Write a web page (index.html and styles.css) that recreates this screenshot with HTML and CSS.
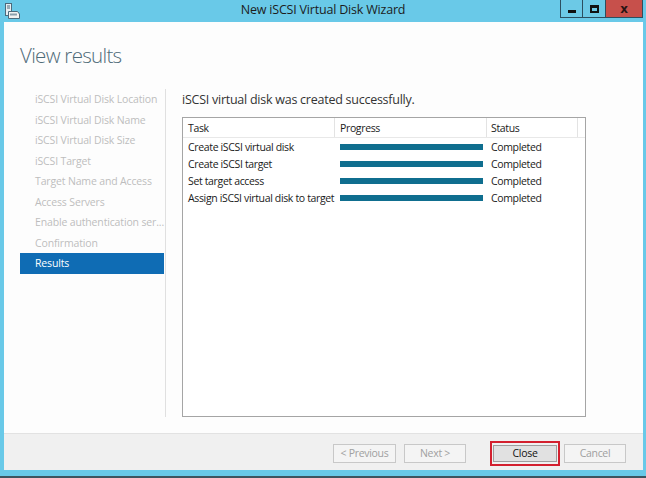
FILE: index.html
```html
<!DOCTYPE html>
<html>
<head>
<meta charset="utf-8">
<link rel="stylesheet" href="styles.css">
</head>
<body>
<div class="window">
  <div class="titlebar">
    <svg class="app-icon" width="16" height="16" viewBox="0 0 16 16">
      <rect x="1.5" y="0.5" width="6" height="12" fill="#e8eef2" stroke="#4c6a7c"/>
      <line x1="3" y1="3" x2="6" y2="3" stroke="#4c6a7c"/>
      <line x1="3" y1="5" x2="6" y2="5" stroke="#4c6a7c"/>
      <path d="M4.5 8.5 H13.5 L15.5 11 V15.5 H4.5 Z" fill="#f2f2f2" stroke="#4c6a7c"/>
      <rect x="6" y="10.5" width="7" height="2" fill="#8aa0ae"/>
    </svg>
    <div class="title">New iSCSI Virtual Disk Wizard</div>
    <div class="controls">
      <div class="ctl min"><span class="min-bar"></span></div>
      <div class="ctl max"><span class="max-box"></span></div>
      <div class="ctl close">x</div>
    </div>
  </div>
  <div class="client">
    <div class="main">
      <h1 class="heading">View results</h1>
      <div class="body">
        <ul class="nav">
          <li>iSCSI Virtual Disk Location</li>
          <li>iSCSI Virtual Disk Name</li>
          <li>iSCSI Virtual Disk Size</li>
          <li>iSCSI Target</li>
          <li>Target Name and Access</li>
          <li>Access Servers</li>
          <li>Enable authentication ser...</li>
          <li>Confirmation</li>
          <li class="active">Results</li>
        </ul>
        <div class="sep"></div>
        <div class="content">
          <div class="message">iSCSI virtual disk was created successfully.</div>
          <div class="table">
            <div class="row head">
              <div class="c task">Task</div>
              <div class="c prog">Progress</div>
              <div class="c status">Status</div>
              <div class="c extra"></div>
            </div>
            <div class="row">
              <div class="c task">Create iSCSI virtual disk</div>
              <div class="c prog"><span class="bar"></span></div>
              <div class="c status">Completed</div>
            </div>
            <div class="row">
              <div class="c task">Create iSCSI target</div>
              <div class="c prog"><span class="bar"></span></div>
              <div class="c status">Completed</div>
            </div>
            <div class="row">
              <div class="c task">Set target access</div>
              <div class="c prog"><span class="bar"></span></div>
              <div class="c status">Completed</div>
            </div>
            <div class="row">
              <div class="c task">Assign iSCSI virtual disk to target</div>
              <div class="c prog"><span class="bar"></span></div>
              <div class="c status">Completed</div>
            </div>
          </div>
        </div>
      </div>
    </div>
    <div class="footer">
      <button class="btn disabled">&lt; Previous</button>
      <button class="btn disabled next">Next &gt;</button>
      <div class="focus-ring"><button class="btn primary">Close</button></div>
      <button class="btn disabled">Cancel</button>
    </div>
  </div>
</div>
</body>
</html>
```

FILE: styles.css
```css
* { box-sizing: border-box; }
html, body { margin: 0; padding: 0; }
body {
  width: 646px;
  height: 478px;
  overflow: hidden;
  font-family: "Open Sans", "Noto Sans", sans-serif;
  background: #69c9e8;
}
.window {
  width: 646px;
  height: 478px;
  display: flex;
  flex-direction: column;
  background: #69c9e8;
  border-bottom: 2px solid #3d5560;
}
.titlebar {
  height: 22px;
  position: relative;
  display: flex;
  align-items: flex-start;
}
.app-icon {
  position: absolute;
  left: 4px;
  top: 3px;
}
.title {
  width: 100%;
  text-align: center;
  font-size: 12.5px;
  letter-spacing: -0.2px;
  line-height: 20px;
  color: #1c1c1c;
}
.controls {
  position: absolute;
  top: 0;
  left: 560px;
  display: flex;
}
.ctl {
  height: 18px;
  border: 1px solid #2c4f60;
  border-top: none;
  display: flex;
  align-items: center;
  justify-content: center;
}
.min, .max { width: 23px; background: #6cc9e6; }
.max { border-left: none; }
.close {
  width: 37px;
  border-left: none;
  background: #c7504b;
  color: #2a1414;
  font-weight: bold;
  font-size: 12px;
  line-height: 1;
  font-family: "DejaVu Sans", sans-serif;
}
.min-bar { display: block; width: 8px; height: 3px; background: #111; margin-top: 5px; }
.max-box { display: block; width: 9px; height: 8px; border: 2px solid #111; border-top-width: 3px; }
.client {
  flex: 1;
  margin: 0 3px 6px 4px;
  background: #fdfdfd;
  display: flex;
  flex-direction: column;
}
.main {
  height: 411px;
  padding: 18px 0 0 16px;
  display: flex;
  flex-direction: column;
}
.heading {
  margin: 0;
  font-size: 20.5px;
  font-weight: 300;
  letter-spacing: -0.7px;
  line-height: 30px;
  color: #4e6b78;
}
.body {
  display: flex;
  margin-top: 19px;
}
.nav {
  list-style: none;
  margin: 0;
  padding: 0;
  width: 144px;
}
.nav li {
  height: 20.5px;
  line-height: 20.5px;
  padding-left: 15px;
  font-size: 10.5px;
  letter-spacing: -0.15px;
  color: #bdbdbd;
  white-space: nowrap;
}
.nav li.active {
  background: #0f6cb4;
  color: #ffffff;
}
.sep {
  width: 1px;
  height: 328px;
  margin-left: 1px;
  background: #e0e0e0;
}
.content {
  margin-left: 16px;
  width: 404px;
}
.message {
  font-size: 12.5px;
  letter-spacing: -0.25px;
  line-height: 20px;
  margin-top: 1px;
  color: #333;
}
.table {
  margin-top: 7px;
  height: 300px;
  border: 1px solid #a5a5a5;
  background: #fff;
}
.row {
  display: flex;
  height: 17.2px;
  align-items: center;
  font-size: 10.5px;
  letter-spacing: -0.35px;
  color: #1a1a1a;
}
.row.head {
  height: 20px;
  border-bottom: 1px solid #e8e8e8;
}
.c {
  height: 100%;
  display: flex;
  align-items: center;
  white-space: nowrap;
  overflow: hidden;
}
.task { width: 152px; padding-left: 5px; }
.prog { width: 152px; padding-left: 5px; }
.status { width: 91px; padding-left: 4px; }
.extra { flex: 1; }
.head .c { border-right: 1px solid #e3e3e3; }
.head .extra { border-right: none; }
.bar {
  display: block;
  width: 143px;
  height: 6px;
  background: #0f6e8f;
}
.footer {
  flex: 1;
  background: #f0f0f0;
  border-top: 1px solid #e2e2e2;
  display: flex;
  align-items: center;
  padding: 2px 0 0 329px;
}
.btn {
  height: 19px;
  width: 63px;
  padding: 0;
  font-family: "Open Sans", "Noto Sans", sans-serif;
  font-size: 10.5px;
  letter-spacing: -0.3px;
  border: 1px solid #adadad;
  background: #f2f2f2;
  color: #1a1a1a;
}
.btn.disabled {
  color: #a0a0a0;
  border-color: #c8c8c8;
  background: #f4f4f4;
}
.btn.next { margin-left: 8px; width: 62px; }
.focus-ring {
  margin-left: 24px;
  border: 2px solid #d3202e;
  padding: 2px 1px;
  height: 25px;
  display: flex;
  align-items: center;
}
.btn.primary {
  width: 64px;
  height: 17px;
  background: #e1e1e1;
  border-color: #9e9e9e;
  color: #111;
}
.focus-ring + .btn { margin-left: 4px; width: 62px; }
```
